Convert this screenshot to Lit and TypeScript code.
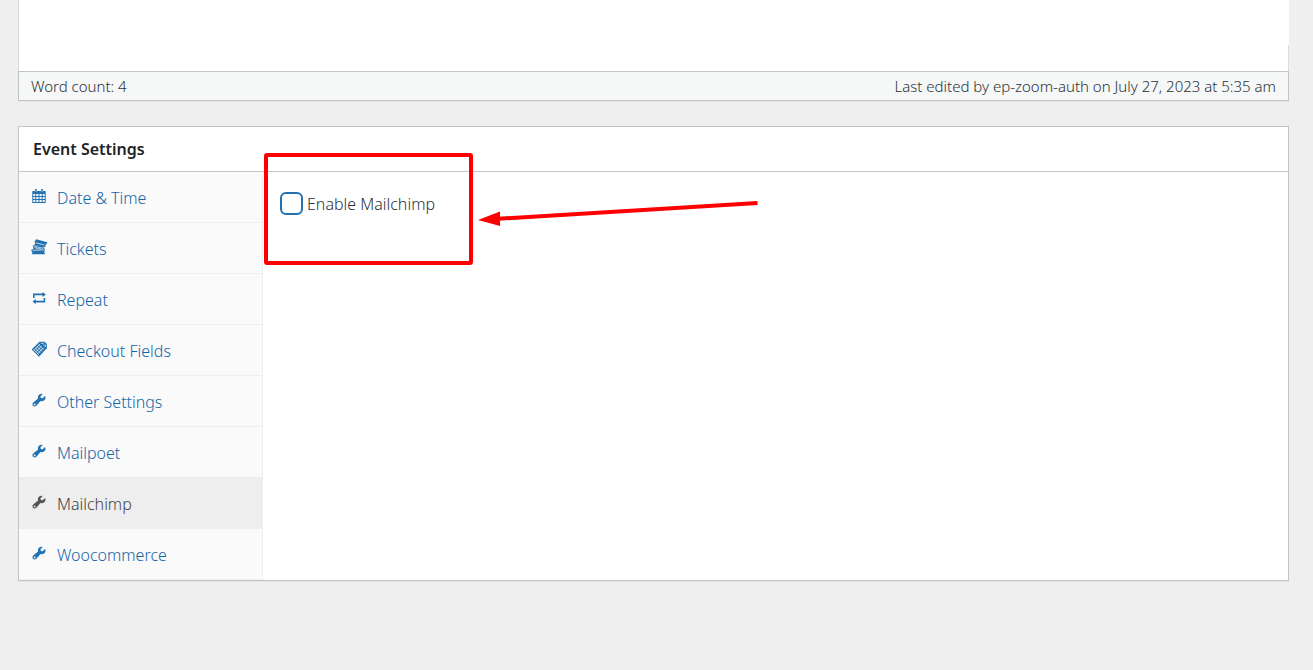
import { LitElement, html, css, svg } from "lit";
import { customElement, state } from "lit/decorators.js";
import { classMap } from "lit/directives/class-map.js";

interface Icon {
  box: string;
  art: unknown;
}

const icons: Record<string, Icon> = {
  calendar: {
    box: "0 0 14 14",
    art: svg`<path fill-rule="evenodd" d="M1 2h2V.700q0-.700.700-.700h.600q.700 0 .700.700V2h4V.700q0-.700.700-.700h.600q.700 0 .700.700V2h2q.700 0 .700.700V14H.300V2.700Q.300 2 1 2ZM1.300 5v2h2V5Zm3 0v2h2.200V5Zm3.200 0v2h2.200V5Zm3.200 0v2h2V5ZM1.300 8v2h2V8Zm3 0v2h2.200V8Zm3.200 0v2h2.200V8Zm3.200 0v2h2V8ZM1.300 11v2h2v-2Zm3 0v2h2.200v-2Zm3.200 0v2h2.200v-2Zm3.200 0v2h2v-2ZM3.700 1v2h.600V1Zm6 0v2h.600V1Z"/>`,
  },
  tickets: {
    box: "1 1 14 14",
    art: svg`<path d="M5.200.200 16.300 3.200 15.500 5 14.400 5.800 14.700 7.300 13.600 8.300 3.200 6 4.300 4.200 3.500 2.800Z"/>
      <path d="M1.700 6.400 12 5.500 13.600 7 12.900 8.500 14 10.500 3.300 12 1.800 10.800 2.400 9Z"/>
      <path d="M.400 10.500H13.300L13.900 12 13 13 14.300 15.300H.600L1.500 13.200.400 12.300Z"/>
      <path class="line" d="M5 3.900 13.400 6M3.400 7.100 11.600 9.200 13.300 8.300M3.400 8.600 10 10.200M1.800 11.300 12.800 10.900"/>`,
  },
  repeat: {
    box: "0 0 14 14",
    art: svg`<path d="M1 2.600h9.500V1L13.800 3.500 10.500 6V4.200H2.600V7H1ZM13.200 7v4.400H3.800V13L.500 10.500 3.800 8v1.800h7.800V7Z"/>`,
  },
  fields: {
    box: "1 1 14 14",
    art: svg`<path d="M8.500.800h5L15.800 3v4.200L8 15.700.600 8.500Z"/>
      <path class="line" d="m2.600 8.500 5.200 5.200M4.200 6.900l5.200 5.200M5.800 5.300l5.200 5.200M7.400 3.700l5.200 5.200M3 9.300 8.800 3M4.700 11l6-6.200M6.500 12.800l6-6.200M9.800 2.300h3M12.500 4h1.800v2"/>`,
  },
  wrench: {
    box: "0 0 16 16",
    art: svg`<path fill-rule="evenodd" d="M14.900 3.500 12.200 5.900 10.100 5.600 9.700 3.600 12.200 1C10.300.300 8 1.100 7.100 3.100 6.600 4.200 6.600 5.200 6.900 6.200L1.400 10.800C.300 11.800.200 13.500 1.200 14.600S4 15.500 5 14.500L9.700 9C11.500 9.700 13.500 9.200 14.700 7.700 15.600 6.500 15.700 4.700 14.900 3.500ZM3 12a1 1 0 1 1 0 2 1 1 0 0 1 0-2Z"/>`,
  },
};

const tabs = [
  { label: "Date & Time", icon: "calendar" },
  { label: "Tickets", icon: "tickets" },
  { label: "Repeat", icon: "repeat" },
  { label: "Checkout Fields", icon: "fields" },
  { label: "Other Settings", icon: "wrench" },
  { label: "Mailpoet", icon: "wrench" },
  { label: "Mailchimp", icon: "wrench" },
  { label: "Woocommerce", icon: "wrench" },
];

@customElement("app-root")
export class AppRoot extends LitElement {
  @state() private active = "Mailchimp";

  static styles = css`
    :host {
      display: block;
      box-sizing: border-box;
      min-height: 100vh;
      padding: 0 24px 24px 18px;
      background: #efefef;
      color: #2c3338;
      font: 300 16px/20px "Segoe UI", "Noto Sans", sans-serif;
    }
    * { box-sizing: border-box; }
    .editor {
      height: 71px;
      background: #fff;
      border-left: 1px solid #dcdcde;
      display: flex;
      align-items: flex-end;
      justify-content: flex-end;
    }
    .edge { width: 1px; height: 26px; background: #dcdcde; }
    .status {
      display: flex;
      justify-content: space-between;
      padding: 4px 12px;
      border: 1px solid #c3c4c7;
      background: #f6f7f7;
      box-shadow: 0 1px 1px rgba(0, 0, 0, 0.04);
      font-size: 15px;
    }
    .panel {
      position: relative;
      margin-top: 25px;
      border: 1px solid #c3c4c7;
      background: #fff;
      box-shadow: 0 1px 1px rgba(0, 0, 0, 0.04);
    }
    .title {
      margin: 0;
      padding: 12px 14px;
      border-bottom: 1px solid #c3c4c7;
      color: #1d2327;
      font-size: 16px;
      line-height: 20px;
      font-weight: 600;
    }
    .body { display: grid; grid-template-columns: 244px 1fr; }
    .tabs {
      margin: 0;
      padding: 0;
      list-style: none;
      background: #fafafa;
      border-right: 1px solid #eee;
    }
    .tab {
      display: flex;
      align-items: center;
      gap: 11px;
      height: 51px;
      padding: 2px 13px 0;
      border-bottom: 1px solid #eee;
      color: #1464a8;
      text-decoration: none;
    }
    .tab.active { background: #eee; color: #444; }
    .icon {
      width: 14px;
      height: 14px;
      margin-bottom: 5px;
      overflow: visible;
      fill: #2271b1;
    }
    .active .icon { fill: #555; }
    .line { fill: none; stroke: #fafafa; stroke-width: 0.7; }
    .content { padding: 20px 17px; }
    .option { display: flex; align-items: center; gap: 4px; }
    .check {
      appearance: none;
      width: 23px;
      height: 23px;
      margin: 0;
      border: 2px solid #2271b1;
      border-radius: 6px;
      background: #fff;
    }
    .marks {
      position: absolute;
      left: 245px;
      top: 26px;
      width: 496px;
      height: 113px;
      pointer-events: none;
    }
  `;

  render() {
    return html`
      <div class="editor"><span class="edge"></span></div>
      <div class="status">
        <span>Word count: 4</span>
        <span>Last edited by ep-zoom-auth on July 27, 2023 at 5:35 am</span>
      </div>
      <section class="panel">
        <h2 class="title">Event Settings</h2>
        <div class="body">
          <ul class="tabs">
            ${tabs.map(
              (t) => html`<li>
                <a
                  href="#"
                  class=${classMap({ tab: true, active: t.label === this.active })}
                  @click=${(e: Event) => {
                    e.preventDefault();
                    this.active = t.label;
                  }}
                ><svg class="icon" viewBox=${icons[t.icon].box} aria-hidden="true">${icons[t.icon].art}</svg><span>${t.label}</span></a>
              </li>`
            )}
          </ul>
          <div class="content">
            <div class="option">
              <input class="check" type="checkbox" id="enable" />
              <label for="enable">Enable Mailchimp</label>
            </div>
          </div>
        </div>
        <svg class="marks" viewBox="0 0 496 113" aria-hidden="true">
          <rect x="2" y="2" width="205" height="108" rx="1" fill="none" stroke="#f00" stroke-width="4" />
          <path d="M493.500 50 230 66" stroke="#f00" stroke-width="4" />
          <path d="M214 67 236 58.500v14.500Z" fill="#f00" />
        </svg>
      </section>
    `;
  }
}
